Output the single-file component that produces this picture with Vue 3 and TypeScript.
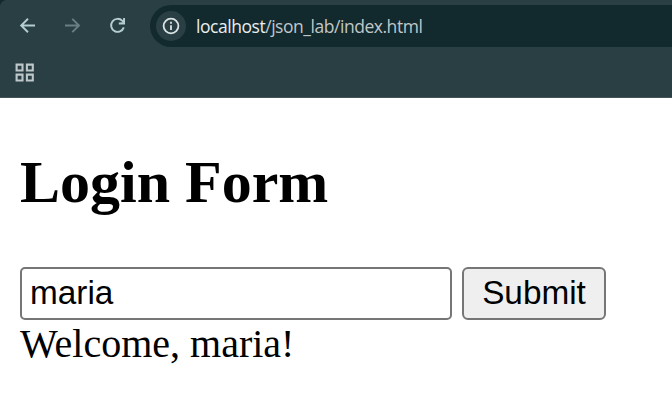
<script setup lang="ts">
import { ref } from 'vue'

const username = ref<string>('maria')
const message = ref<string>('Welcome, maria!')

function submit(): void {
  message.value = `Welcome, ${username.value}!`
}
</script>

<template>
  <div class="window">
    <header class="chrome">
      <div class="toolbar">
        <svg class="icon back" width="20" height="20" viewBox="0 0 20 20">
          <path d="M17 9.5H3.7M10 2.8L3.2 9.5L10 16.2" />
        </svg>
        <svg class="icon forward" width="20" height="20" viewBox="0 0 20 20">
          <path d="M2 9.5H15.6M9.3 2.8L16 9.5L9.3 16.2" />
        </svg>
        <svg class="icon reload" width="20" height="20" viewBox="0 0 20 20">
          <path d="M15.8 11.4A6.5 6.5 0 1 1 14.4 4.9L16.4 6.9" />
          <path class="tip" d="M17 2V8.4H10.8V6.6L14.8 6.2L15.2 2Z" />
        </svg>
        <div class="omnibox">
          <span class="site-info">
            <svg width="20" height="20" viewBox="0 0 20 20">
              <circle cx="10" cy="10" r="7.4" />
              <path d="M10 9.2V14M10 5.8V7.8" />
            </svg>
          </span>
          <span class="url"><b>localhost</b>/json_lab/index.html</span>
        </div>
      </div>
      <div class="bookmarks">
        <svg width="20" height="20" viewBox="0 0 20 20">
          <path d="M1.6 1.6H7.5V7.5H1.6ZM11.9 1.6H17.8V7.5H11.9ZM1.6 11.6H7.5V17.5H1.6ZM11.9 11.6H17.8V17.5H11.9Z" />
        </svg>
      </div>
    </header>
    <main class="page">
      <h2>Login Form</h2>
      <form @submit.prevent="submit">
        <input v-model="username" type="text" spellcheck="false" />
        <button type="submit">Submit</button>
      </form>
      <p>{{ message }}</p>
    </main>
  </div>
</template>

<style>
body {
  margin: 0;
  background: #fff;
}
</style>

<style scoped>
.window {
  height: 408px;
  overflow: hidden;
  background: #fff;
}
.chrome {
  box-sizing: border-box;
  height: 98px;
  background: radial-gradient(circle at 8px 8px, #293f43 7.8px, #12292d 8.8px) 0 0 / 8px 8px no-repeat,
    linear-gradient(#293f43, #293f43) 8px 0 no-repeat,
    linear-gradient(#293f43, #293f43) 0 8px no-repeat;
  border-bottom: 1px solid #435459;
}
.toolbar {
  display: flex;
  align-items: center;
  height: 42px;
  padding: 5px 0 0 18px;
}
.icon {
  flex: none;
  fill: none;
  stroke: #b4cdd2;
  stroke-width: 1.9;
}
.forward {
  margin-left: 25px;
  stroke: #6b7f83;
}
.reload {
  margin-left: 25px;
}
.tip {
  fill: #b4cdd2;
  stroke: none;
}
.omnibox {
  display: flex;
  align-items: center;
  flex: 1;
  box-sizing: border-box;
  height: 42px;
  margin-left: 22px;
  padding-left: 6px;
  border-radius: 21px 0 0 21px;
  background: #12292d;
}
.site-info {
  display: flex;
  align-items: center;
  justify-content: center;
  width: 30px;
  height: 30px;
  border-radius: 50%;
  background: #293f43;
}
.site-info svg {
  fill: none;
  stroke: #dce3e5;
  stroke-width: 1.8;
}
.url {
  margin-left: 10px;
  font: 17.5px/24px "Open Sans", "Noto Sans", sans-serif;
  letter-spacing: -0.46px;
  color: #c0c7c9;
  white-space: nowrap;
}
.url b {
  font-weight: 400;
  color: #e9eeef;
}
.bookmarks {
  display: flex;
  padding: 16px 0 0 15px;
}
.bookmarks svg {
  fill: none;
  stroke: #bec7c9;
  stroke-width: 2.1;
}
.page {
  padding: 0 20px;
  font: 40px/45px "Liberation Serif", "Times New Roman", serif;
  color: #000;
}
h2 {
  margin: 0;
  padding: 50px 0;
  font-size: 60px;
  line-height: 69px;
  font-weight: 700;
}
form {
  display: flex;
  gap: 10px;
}
input,
button {
  box-sizing: border-box;
  height: 53px;
  margin: 0;
  border: 2px solid #767676;
  font: 33.333px/38px "Liberation Sans", Arial, sans-serif;
  color: #000;
  outline: none;
}
input {
  width: 432px;
  padding: 1px 8px 3px;
  border-radius: 5px;
  background: #fff;
}
button {
  width: 144px;
  padding: 0 0 2px;
  border-radius: 6px;
  background: #efefef;
}
p {
  margin: 0;
  padding-top: 1px;
}
</style>
